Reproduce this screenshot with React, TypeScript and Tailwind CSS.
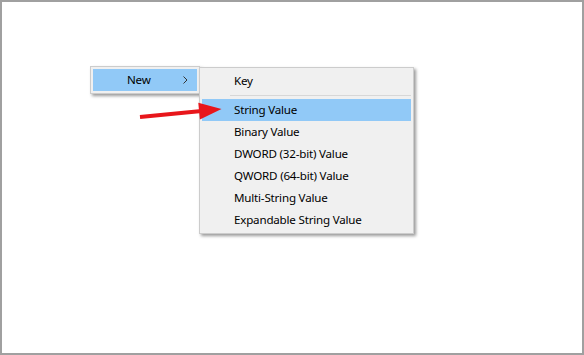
import React from "react";

const items = [
  "String Value",
  "Binary Value",
  "DWORD (32-bit) Value",
  "QWORD (64-bit) Value",
  "Multi-String Value",
  "Expandable String Value",
];

export default function App() {
  return (
    <div
      className="relative w-[584px] h-[355px] border-2 border-[#a0a0a0] bg-white overflow-hidden text-[11.6px] tracking-[-0.2px] text-black"
      style={{ fontFamily: '"Noto Sans", "Open Sans", sans-serif' }}
    >
      {/* First menu */}
      <div className="absolute left-[88px] top-[64px] w-[110px] border border-[#cccccc] bg-[#f0f0f0] p-[2px] shadow-[2px_2px_3px_rgba(0,0,0,0.4)]">
        <div className="flex h-[22px] items-center bg-[#91c9f7] pl-[34px] pr-[8px]">
          <span className="flex-1 leading-none">New</span>
          <svg width="5" height="8" viewBox="0 0 5 8" className="mr-[1px]">
            <path d="M0.5 0.5 L4 4 L0.5 7.5" fill="none" stroke="#333" strokeWidth="1" />
          </svg>
        </div>
      </div>

      {/* Submenu */}
      <div className="absolute left-[197px] top-[65px] w-[215px] border border-[#cccccc] bg-[#f0f0f0] p-[2px] shadow-[2px_2px_3px_rgba(0,0,0,0.4)]">
        <div className="flex h-[22px] items-center pl-[32px]">
          <span className="leading-none">Key</span>
        </div>
        <div className="flex h-[7px] items-center pl-[28px]">
          <div className="h-px w-full bg-[#d7d7d7]" />
        </div>
        {items.map((t, i) => (
          <div
            key={t}
            className={
              "flex h-[22px] items-center pl-[32px] " + (i === 0 ? "bg-[#91c9f7]" : "")
            }
          >
            <span className="leading-none">{t}</span>
          </div>
        ))}
      </div>

      {/* Red arrow */}
      <svg
        className="absolute left-[-2px] top-[-2px] pointer-events-none"
        width="584"
        height="355"
        viewBox="0 0 584 355"
      >
        <polygon
          points="140.2,119 199.3,113.2 199.9,119.6 221.5,109 198.3,102.8 198.9,109.2 139.8,115"
          fill="#e8161b"
        />
      </svg>
    </div>
  );
}
